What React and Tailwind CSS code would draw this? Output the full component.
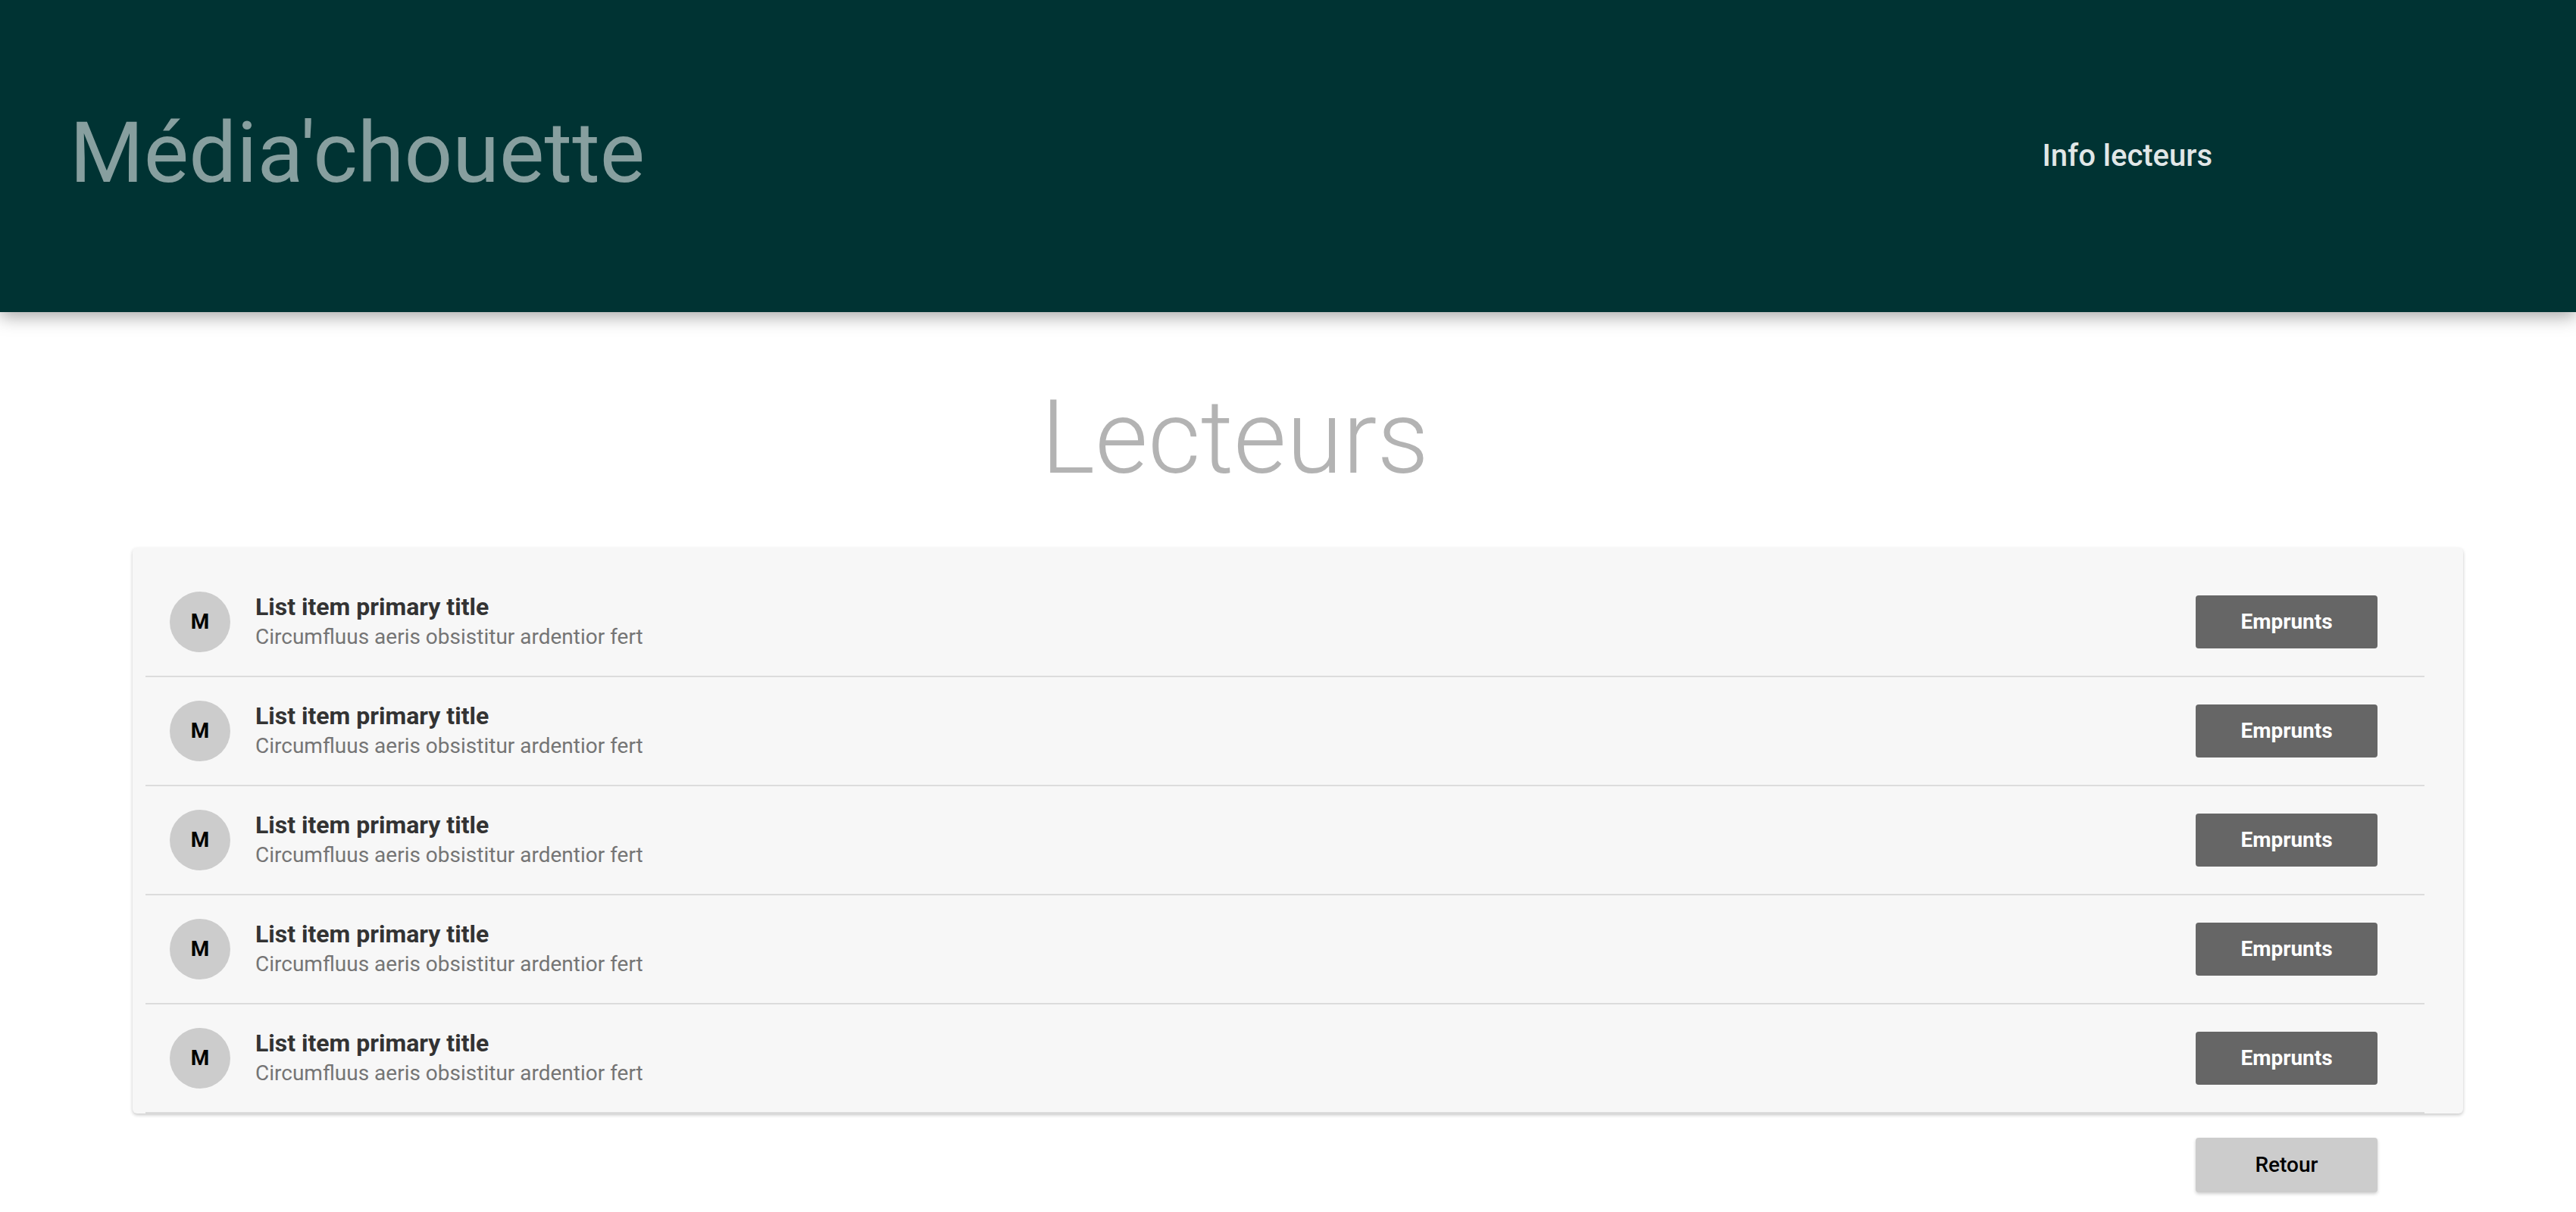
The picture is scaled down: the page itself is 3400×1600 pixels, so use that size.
import React from "react";

function Row() {
  return (
    <div className="flex h-[144px] items-center border-b-2 border-[#dcdcdc] pl-[32px] pr-[62px]">
      <div className="flex h-[80px] w-[80px] shrink-0 items-center justify-center rounded-full bg-[#cccccc] text-[28px] font-bold text-black">
        M
      </div>
      <div className="ml-[33px] flex flex-1 flex-col">
        <div className="text-[32px] font-bold leading-[40px] text-[#333333]">List item primary title</div>
        <div className="text-[28px] leading-[40px] text-[#757575]">Circumfluus aeris obsistitur ardentior fert</div>
      </div>
      <button className="flex h-[70px] w-[240px] items-center justify-center rounded-[4px] bg-[#666666] text-[28px] font-bold text-white">
        Emprunts
      </button>
    </div>
  );
}

export default function App() {
  return (
    <div className="min-h-[1600px] bg-white font-['Roboto',sans-serif]">
      <header className="relative z-10 flex h-[412px] items-center justify-between bg-[#003333] pb-[8px] pl-[92px] pr-[480px] shadow-[0_6px_22px_rgba(0,0,0,0.35)]">
        <div className="text-[112px] font-normal leading-none text-[#879f9f]">Média'chouette</div>
        <nav className="mt-[8px] text-[40px] font-medium leading-none text-[#e1e7e7]">Info lecteurs</nav>
      </header>
      <main>
        <h1 className="mt-[99px] flex justify-center pr-[140px] text-[135px] font-light leading-none text-[#b3b3b3]">
          Lecteurs
        </h1>
        <section className="ml-[175px] mt-[77px] w-[3076px] rounded-[6px] bg-[#f7f7f7] pt-[27px] shadow-[0_2px_4px_rgba(0,0,0,0.22)]">
          <div className="ml-[17px] w-[3008px]">
            <Row />
            <Row />
            <Row />
            <Row />
            <Row />
          </div>
        </section>
        <div className="ml-[175px] mt-[32px] flex w-[3076px] justify-end pr-[113px]">
          <button className="flex h-[72px] w-[240px] items-center justify-center rounded-[4px] bg-[#cccccc] text-[28px] font-medium text-black shadow-[0_2px_4px_rgba(0,0,0,0.2)]">
            Retour
          </button>
        </div>
      </main>
    </div>
  );
}
